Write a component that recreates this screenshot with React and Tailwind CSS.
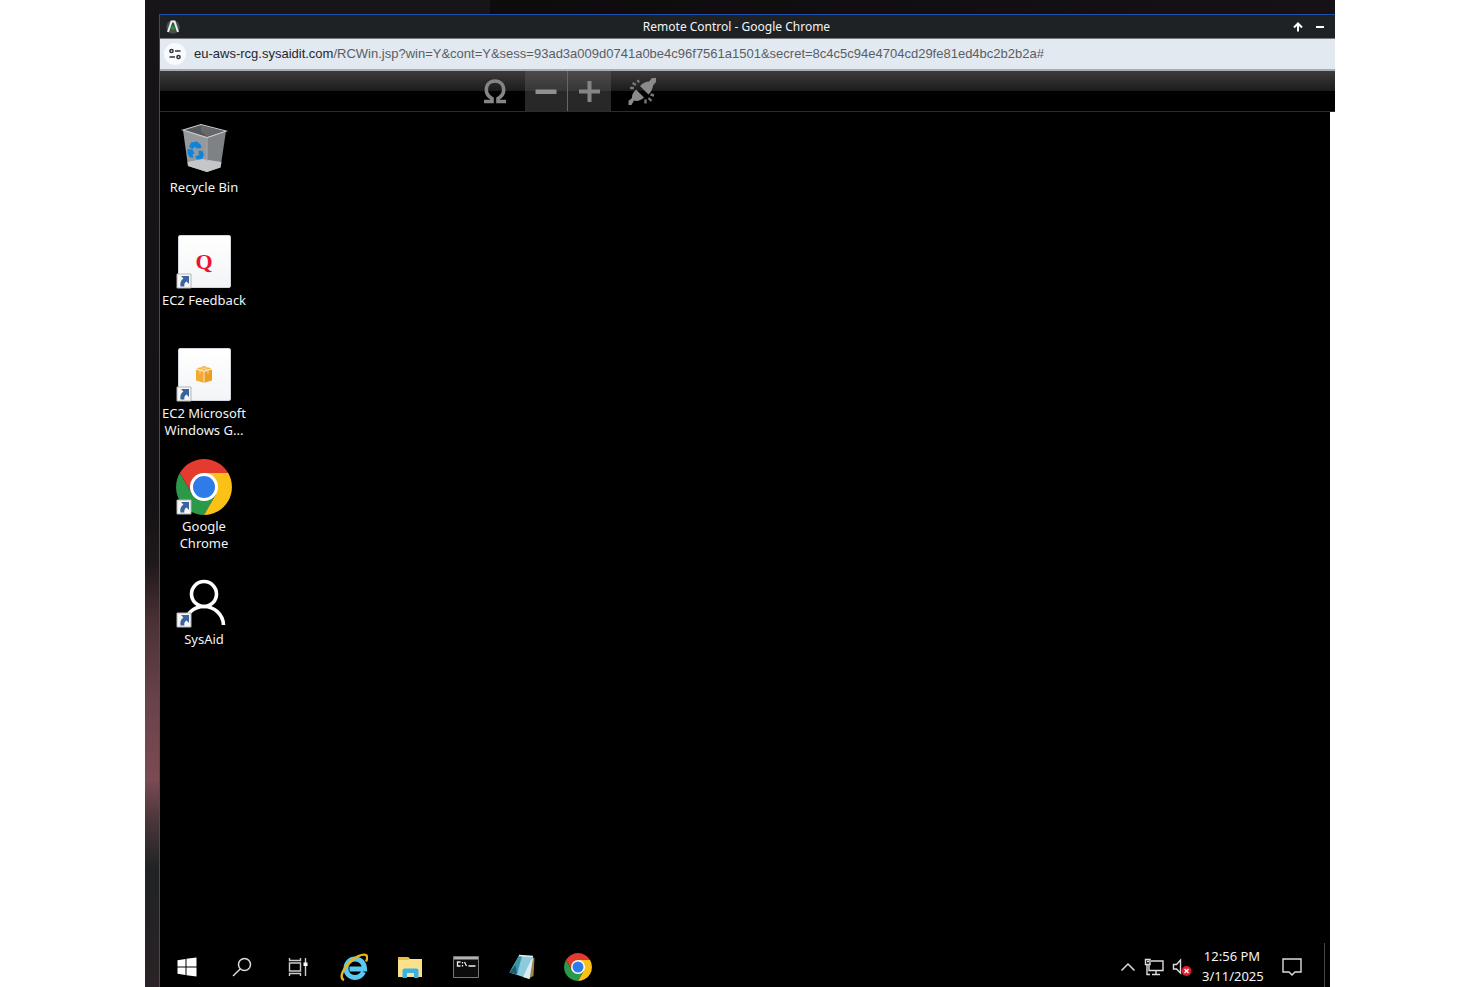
import React from "react";

const url = {
  host: "eu-aws-rcg.sysaidit.com",
  path: "/RCWin.jsp?win=Y&cont=Y&sess=93ad3a009d0741a0be4c96f7561a1501&secret=8c4c5c94e4704cd29fe81ed4bc2b2b2a#",
};

function ChromeLogo({ className }) {
  return (
    <svg className={className} viewBox="0 0 56 56" aria-hidden="true">
      <path d="M28 14 H52.2 A28 28 0 0 0 3.8 14 L15.9 35 Z" fill="#e33b2e" />
      <path d="M15.9 35 L3.8 14 A28 28 0 0 0 28 56 L40.1 35 Z" fill="#2a9a48" />
      <path d="M40.1 35 L28 56 A28 28 0 0 0 52.2 14 H28 Z" fill="#fbc116" />
      <circle cx="28" cy="28" r="14" fill="#fff" />
      <circle cx="28" cy="28" r="11" fill="#2f7bea" />
    </svg>
  );
}

function ShortcutArrow() {
  return (
    <svg className="absolute bottom-0 left-0 h-4 w-4" viewBox="0 0 16 16" aria-hidden="true">
      <path d="M1 1h14v14H1z" fill="#f6f6f6" stroke="#b5b5b5" />
      <path d="M5 3h8v8l-2.4-2.4C8.600 9.800 8 11 8.400 13.500H4.500C3.800 10 4.800 7.400 7.400 5.400Z" fill="#3a649f" />
    </svg>
  );
}

function RecycleBin() {
  return (
    <svg className="h-14 w-14" viewBox="0 0 56 56" aria-hidden="true">
      <path d="M7 10 31 17 31 52 12 46Z" fill="#96999c" />
      <path d="M31 17 50 11 44.500 47.500 31 52Z" fill="#7f8285" />
      <path d="M11.500 42 26 39 45.500 42 44.500 47.500 31 52 12 46Z" fill="#c4c6c9" />
      <path d="M7 10 25 4.500 50 11 31 17.500Z" fill="#55575a" stroke="#c9cbcd" strokeWidth="1.200" />
      <path d="M25 5.500v6l6 5 17-5.500Z" fill="#66686b" />
      <path d="M31 17.500V41" stroke="#a8abae" />
      <path d="M15 22.500l6-1 4 3.500.5 3-5 .5-1.500-2-2.500 2.500-3.500-2Z" fill="#0a84dc" />
      <path d="M11.500 29l5 .5 2 4-2 1 1 3.500-4-1-2-4Z" fill="#0a84dc" />
      <path d="M22.500 30.500l4 .500 1.500 4-2 4-5 .5-2-3 4-1.500Z" fill="#0a84dc" />
    </svg>
  );
}

function Tile({ children }) {
  return (
    <div className="flex h-[53px] w-[53px] items-center justify-center rounded-xs border border-gray-300 bg-linear-to-b from-white to-gray-100">
      {children}
    </div>
  );
}

function BoxIcon() {
  return (
    <svg className="h-5 w-5" viewBox="0 0 20 20" aria-hidden="true">
      <path d="M2 5.500 9.600 7.800v11L2 16.500Z" fill="#f2ab32" />
      <path d="M18 5.500 10.400 7.800v11L18 16.500Z" fill="#eb9f22" />
      <path d="M2.500 4.500 10 2l7.500 2.500L10 6.900Z" fill="#f4b544" />
      <path d="M6 3.300 14 5.800v4M14 3.300 6 5.800v4" stroke="#fbd284" fill="none" />
    </svg>
  );
}

function SysAidIcon() {
  return (
    <svg className="h-14 w-14" viewBox="0 0 56 56" fill="none" stroke="#fff" strokeWidth="3.600" aria-hidden="true">
      <circle cx="28" cy="22" r="12.500" />
      <path d="M9 52C9 42 18 34.500 28 34.500S47 42 47.500 53" />
    </svg>
  );
}

const shortcuts = [
  { name: "Recycle Bin", icon: <RecycleBin /> },
  {
    name: "EC2 Feedback",
    link: true,
    icon: (
      <Tile>
        <span className="font-['Liberation_Serif',serif] text-[22px] font-bold text-[#ee1230]">Q</span>
      </Tile>
    ),
  },
  { name: "EC2 Microsoft Windows G...", link: true, icon: <Tile><BoxIcon /></Tile> },
  { name: "Google Chrome", link: true, icon: <ChromeLogo className="h-14 w-14" /> },
  { name: "SysAid", link: true, icon: <SysAidIcon /> },
];

function DesktopShortcut({ item }) {
  return (
    <button className="flex h-[113px] w-[88px] flex-col items-center pt-2">
      <span className="relative flex h-14 w-14 items-center justify-center">
        {item.icon}
        {item.link && <ShortcutArrow />}
      </span>
      <span className="mt-[3px] text-[13px] leading-[17px] text-gray-100">{item.name}</span>
    </button>
  );
}

function TitleBar() {
  return (
    <header className="flex h-6 items-center border-b border-[#77797b] bg-[#1e2224] pr-1">
      <svg className="mx-1.5 h-3.5 w-3.5" viewBox="0 0 14 14" aria-hidden="true">
        <circle cx="7" cy="7" r="6.800" fill="#4a4d4e" />
        <path d="M2 12 5.500 1.500h3L12 12" fill="none" stroke="#eee" strokeWidth="2" />
        <circle cx="7" cy="8" r="2" fill="#159a24" />
      </svg>
      <h1 className="flex-1 text-center text-xs leading-4 text-gray-100">
        Remote Control - Google Chrome
      </h1>
      <button className="flex w-[22px] justify-center" aria-label="Restore">
        <svg className="h-2.5 w-2.5" viewBox="0 0 10 10" fill="none" stroke="#fff" strokeWidth="2">
          <path d="M5 9.500V2M1 5.500 5 1.500l4 4" />
        </svg>
      </button>
      <button className="flex w-[22px] justify-center" aria-label="Minimize">
        <svg className="h-2.5 w-2.5" viewBox="0 0 10 10">
          <path d="M1 4h8v2H1z" fill="#fff" />
        </svg>
      </button>
    </header>
  );
}

function AddressBar() {
  return (
    <div className="flex h-8 items-center gap-2 border-b-2 border-[#a9abb0] bg-[#e2e9f1] pl-1">
      <button className="flex h-[22px] w-[22px] items-center justify-center rounded-full bg-[#f8fafd]" aria-label="View site information">
        <svg className="h-3 w-3" viewBox="0 0 12 12" fill="none" stroke="#303236" strokeWidth="1.500">
          <circle cx="2.500" cy="3" r="1.600" />
          <path d="M6 3h5.500M.5 9H6" />
          <circle cx="9.500" cy="9" r="1.600" />
        </svg>
      </button>
      <p className="truncate font-['Liberation_Sans',Arial,sans-serif] text-[13px] leading-5 text-[#5a5e64]">
        <span className="text-[#24272b]">{url.host}</span>
        {url.path}
      </p>
    </div>
  );
}

function Toolbar() {
  return (
    <div className="flex h-[41px] border-b border-[#2c2c2c] bg-[linear-gradient(to_bottom,#3c3c3c,#1b1b1b_50%,#000_50%)] pl-[304px]">
      <button className="flex w-[61px] items-center justify-center" aria-label="Special keys">
        <svg className="h-7 w-7" viewBox="0 0 28 28" fill="none" stroke="#858585" strokeWidth="3.600">
          <path d="M3 24.500h8v-3C7.500 19.500 5.300 16.500 5.300 13 5.300 7.500 9 4 14 4s8.700 3.500 8.700 9c0 3.500-2.200 6.500-5.700 8.500v3h8" />
        </svg>
      </button>
      <button className="flex w-[42px] items-center justify-center bg-[linear-gradient(to_bottom,#4b4b4b,#363636_50%,#282828_50%)]" aria-label="Zoom out">
        <svg className="h-6 w-6" viewBox="0 0 24 24">
          <path d="M1.500 10.500h21V15h-21z" fill="#909090" />
        </svg>
      </button>
      <button className="flex w-11 items-center justify-center border-l border-[#666] bg-[linear-gradient(to_bottom,#4b4b4b,#363636_50%,#282828_50%)]" aria-label="Zoom in">
        <svg className="h-6 w-6" viewBox="0 0 24 24">
          <path d="M9.500 2h4v8.500H22v4h-8.500V23h-4v-8.500H1v-4h8.500z" fill="#858585" />
        </svg>
      </button>
      <button className="flex w-[62px] items-center justify-center" aria-label="Disconnect">
        <svg className="h-7 w-7" viewBox="0 0 28 28" fill="#8a8a8a">
          <path d="M12 9C14.500 6 18 4.500 21 4.500L24 1h4v4l-3 3.500c0 3-2 6.500-4.500 9Z" />
          <path d="M8 12.500 16 20.500C13 23.500 9 24.500 6 23.500l-2.500 4.500H.5v-4L4 21C3.500 18 5.500 15 8 12.500Z" />
          <path
            d="M11 5.500 9.500 3M8 8 4.500 6M6 11H2M17.500 22.500v4M20.500 21l3 3M22.500 17.500l3.500 1"
            stroke="#777"
            strokeWidth="2.400"
            fill="none"
          />
        </svg>
      </button>
    </div>
  );
}

const taskbarApps = [
  {
    name: "Internet Explorer",
    icon: (
      <svg className="h-7 w-7" viewBox="0 0 28 28" fill="none">
        <path d="M23.500 19C21.500 23 18.500 24.500 15 24.500 10 24.500 6 21 6 15.500S10 6 15 6c5.500 0 9.500 4 9.500 10H9.500" stroke="#5bc8f2" strokeWidth="5" />
        <path d="M4 27C-.5 25 2 18 8 11S23.500 0 26.500 2.500c1.500 1.500.5 4-.5 6" stroke="#edb51d" strokeWidth="2.400" />
      </svg>
    ),
  },
  {
    name: "File Explorer",
    icon: (
      <svg className="h-[26px] w-[26px]" viewBox="0 0 26 26">
        <path d="M1 3h10l2 2h12v18H1z" fill="#fde08a" />
        <path d="M1 3h10l1.500 2-1.500 1H1z" fill="#efbd3b" />
        <path d="M5.500 24v-7.500a2 2 0 0 1 2-2h12a2 2 0 0 1 2 2V24h-4.500v-5h-7v5z" fill="#38b1e5" />
      </svg>
    ),
  },
  {
    name: "Command Prompt",
    icon: (
      <svg className="h-[26px] w-[26px]" viewBox="0 0 26 26" fill="none">
        <path d="M.5 2.500h25v21H.5z" fill="#0c0c0c" stroke="#777" />
        <path d="M1 3h24v2.500H1z" fill="#aeb3b8" />
        <path d="M7.500 8H4.500v4h3M9.500 8v1.500M9.500 11v1.500M11.500 8l2 4M15.500 12h7" stroke="#eee" strokeWidth="1.300" />
      </svg>
    ),
  },
  {
    name: "Notepad",
    icon: (
      <svg className="h-[26px] w-[26px]" viewBox="0 0 26 26">
        <path d="M22 3l3.500 1-1 18-4 2Z" fill="#a7814b" />
        <path d="M10 1.500 24 2.500 20.500 25 .5 18.500Z" fill="#8ccbd9" />
        <path d="M10 1.500 13 2 8 20.500.5 18.500Z" fill="#3f93a8" />
        <path d="M.5 18.500 6.500 11l1.500 9.500Z" fill="#195f70" />
        <path d="M22 6 24 4 20.500 25 14 23Z" fill="#d9edf2" />
        <path d="M10 1.500 24 2.500" stroke="#e4f2f5" strokeWidth="1.500" />
      </svg>
    ),
  },
  { name: "Google Chrome", icon: <ChromeLogo className="h-7 w-7" /> },
];

function Taskbar() {
  return (
    <footer className="mt-auto flex h-11 pt-1">
      <nav className="flex" aria-label="Taskbar">
        <button className="flex w-[54px] items-center justify-center" aria-label="Start">
          <svg className="h-5 w-5" viewBox="0 0 20 20" fill="#fff">
            <path d="M.5 3.200 8.500 2v7.500h-8zM9.500 1.800 19.500.500v9h-10zM.5 10.500h8V18l-8-1.200zM9.500 10.500h10v9l-10-1.300z" />
          </svg>
        </button>
        <button className="flex w-14 items-center justify-center" aria-label="Search">
          <svg className="h-5 w-5" viewBox="0 0 20 20" fill="none" stroke="#ddd" strokeWidth="1.500">
            <circle cx="12.500" cy="7.500" r="6" />
            <path d="M8.200 12 1 19" />
          </svg>
        </button>
        <button className="flex w-14 items-center justify-center" aria-label="Task View">
          <svg className="h-5 w-5" viewBox="0 0 20 20" fill="none" stroke="#ccc" strokeWidth="1.400">
            <path d="M1.500 6h11v8h-11zM1.500 1v2.500h11V1M1.500 19v-2.500h11V19M17.500 1v18" />
            <path d="M15.500 5.500h4v3.500h-4z" fill="#fff" stroke="none" />
          </svg>
        </button>
        {taskbarApps.map((app) => (
          <button key={app.name} className="flex w-14 items-center justify-center" aria-label={app.name}>
            {app.icon}
          </button>
        ))}
      </nav>

      <div className="ml-auto flex items-center">
        <button className="mr-2" aria-label="Show hidden icons">
          <svg className="h-4 w-4" viewBox="0 0 16 16" fill="none" stroke="#ddd" strokeWidth="1.500">
            <path d="M1.500 11.500 8 5l6.500 6.500" />
          </svg>
        </button>
        <button className="mr-2" aria-label="Network">
          <svg className="h-5 w-5" viewBox="0 0 20 20" fill="none" stroke="#ddd" strokeWidth="1.400">
            <path d="M7 4h12v9.500H5V8M1.500 2.500h4.500v5H1.500zM3 8v9.500h3M12 13.500V17M8 17.500h8M3 4.500h2" />
          </svg>
        </button>
        <button className="mr-2.5" aria-label="Volume">
          <svg className="h-5 w-5" viewBox="0 0 20 20" fill="none" stroke="#ddd" strokeWidth="1.400">
            <path d="M1.500 7.500h3L8.500 3v13l-4-4h-3z" />
            <circle cx="14.500" cy="14" r="5" fill="#d9202e" stroke="none" />
            <path d="m12.500 12 4 4m0-4-4 4" stroke="#fff" />
          </svg>
        </button>
        <time className="mb-0.5 w-[60px] text-center text-[13px] leading-5 text-gray-100">
          12:56 PM
          <br />
          3/11/2025
        </time>
        <button className="ml-5" aria-label="Notifications">
          <svg className="h-5 w-5" viewBox="0 0 20 20" fill="none" stroke="#ddd" strokeWidth="1.400">
            <path d="M1 2h18v13h-6l-3 3-3-3H1z" />
          </svg>
        </button>
        <button className="-mt-1 ml-[22px] h-11 w-1.5 border-l border-[#444]" aria-label="Show desktop"></button>
      </div>
    </footer>
  );
}

function App() {
  return (
    <div className="min-h-screen bg-white px-[145px] font-['Noto_Sans','Open_Sans',sans-serif]">
      <div className="flex min-h-screen flex-col bg-[linear-gradient(to_bottom,#171417,#141214_51%,#1f181a_57%,#4a3135_63%,#68434a_71%,#7c4a53_79%,#4a373b_83%,#202224_88%,#2a2226)]">
        <div className="h-3.5 bg-[linear-gradient(to_right,#181519_29%,#0e0b0d_29%,#151115)]"></div>
        <main className="ml-3.5 flex flex-1 flex-col border-l border-t border-[#1f4fae]">
          <TitleBar />
          <AddressBar />
          <Toolbar />
          <section className="flex flex-1 flex-col bg-white pr-[5px]">
            <div className="flex flex-1 flex-col bg-black">
              {shortcuts.map((item) => (
                <DesktopShortcut key={item.name} item={item} />
              ))}
              <Taskbar />
            </div>
          </section>
        </main>
      </div>
    </div>
  );
}

export default App;
